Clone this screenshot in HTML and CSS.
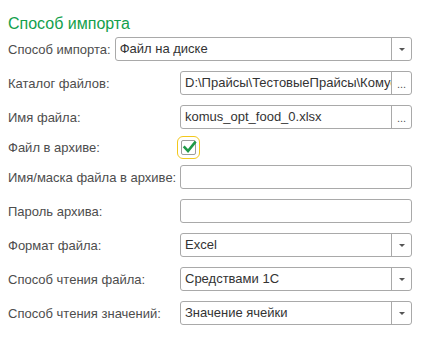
FILE: index.html
```html
<!DOCTYPE html>
<html lang="ru">
<head>
  <meta charset="UTF-8">
  <title>Способ импорта</title>
  <link rel="stylesheet" href="styles.css">
</head>
<body>
  <div class="form">
    <div class="group-title">Способ импорта</div>

    <div class="row-inline">
      <span class="label">Способ импорта:</span>
      <div class="field">
        <span class="value">Файл на диске</span>
        <span class="btn"><i class="arrow"></i></span>
      </div>
    </div>

    <div class="grid">
      <span class="label">Каталог файлов:</span>
      <div class="field">
        <span class="value">D:\Прайсы\ТестовыеПрайсы\Комус\Продукты</span>
        <span class="btn dots">...</span>
      </div>

      <span class="label">Имя файла:</span>
      <div class="field">
        <span class="value">komus_opt_food_0.xlsx</span>
        <span class="btn dots">...</span>
      </div>

      <span class="label check-label">Файл в архиве:</span>
      <div class="check-cell">
        <span class="checkbox">
          <svg width="15" height="15" viewBox="0 0 15 15">
            <path d="M2.6 7.4 L6 11 L12.8 2.6" fill="none" stroke="#1f9a48" stroke-width="2.6" stroke-linecap="square"/>
          </svg>
        </span>
      </div>

      <span class="label">Имя/маска файла в архиве:</span>
      <div class="field"><span class="value"></span></div>

      <span class="label">Пароль архива:</span>
      <div class="field"><span class="value"></span></div>

      <span class="label">Формат файла:</span>
      <div class="field">
        <span class="value">Excel</span>
        <span class="btn"><i class="arrow"></i></span>
      </div>

      <span class="label">Способ чтения файла:</span>
      <div class="field">
        <span class="value">Средствами 1С</span>
        <span class="btn"><i class="arrow"></i></span>
      </div>

      <span class="label">Способ чтения значений:</span>
      <div class="field">
        <span class="value">Значение ячейки</span>
        <span class="btn"><i class="arrow"></i></span>
      </div>
    </div>
  </div>
</body>
</html>
```

FILE: styles.css
```css
* { box-sizing: border-box; }
body {
  margin: 0;
  background: #fff;
  font-family: Arial, "Liberation Sans", sans-serif;
  font-size: 13px;
  color: #4d4d4d;
}
.form {
  width: 412px;
  padding: 14px 0 0 8px;
}
.group-title {
  font-size: 16px;
  line-height: 20px;
  color: #12a04c;
  margin-bottom: 3px;
}
.label {
  white-space: nowrap;
}
.row-inline {
  display: flex;
  align-items: center;
  gap: 4px;
  margin-bottom: 10px;
}
.row-inline .field { flex: 1; }
.grid {
  display: grid;
  grid-template-columns: 172px 1fr;
  row-gap: 10px;
  align-items: center;
}
/* input box */
.field {
  display: flex;
  height: 24px;
  border: 1px solid #a9a9a9;
  border-radius: 3px;
  background: #fff;
  overflow: hidden;
}
.value {
  flex: 1;
  min-width: 0;
  padding: 0 4px;
  line-height: 22px;
  color: #333;
  white-space: nowrap;
  overflow: hidden;
}
.btn {
  flex: none;
  width: 20px;
  border-left: 1px solid #a9a9a9;
  display: flex;
  align-items: center;
  justify-content: center;
  color: #555;
}
.arrow {
  width: 0; height: 0;
  border-left: 3px solid transparent;
  border-right: 3px solid transparent;
  border-top: 3px solid #555;
}
.dots {
  font-size: 11px;
  line-height: 22px;
  padding-top: 2px;
  letter-spacing: 0;
}
/* checkbox */
.check-cell {
  height: 16px;
  padding-left: 1px;
  display: flex;
  align-items: center;
}
.checkbox {
  width: 15px;
  height: 15px;
  border: 1px solid #9c9c9c;
  border-radius: 2px;
  outline: 1px solid #f3c81c;
  outline-offset: 3px;
  position: relative;
}
.checkbox svg {
  position: absolute;
  left: 0; top: -1px;
}
```
